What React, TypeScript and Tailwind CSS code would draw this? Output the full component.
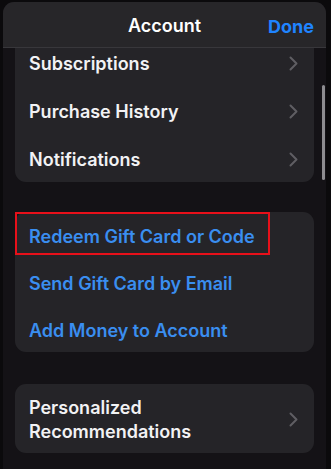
import React from "react";

const Chevron = () => (
  <svg width="9" height="15" viewBox="0 0 9 15" fill="none" className="shrink-0">
    <path d="M1.5 1.5 L7.5 7.5 L1.5 13.5" stroke="#5f5e63" strokeWidth="2" strokeLinecap="round" strokeLinejoin="round" />
  </svg>
);

const W = "text-[#f2f2f4] font-semibold text-[18px]";
const B = "text-[#3a8ef0] font-semibold text-[18px]";

export default function App() {
  const font = { fontFamily: "Inter, 'Noto Sans', sans-serif" };
  return (
    <div className="w-[331px] h-[469px] bg-[#0b0a0c] pl-[3px] pr-[5px] pt-[2px] overflow-hidden" style={font}>
      <div className="relative h-full rounded-t-[11px] bg-[#141216] overflow-hidden">
        <div className="h-[46px] bg-[#272629] border-b border-[#38373b] flex items-center justify-center relative pt-[2px]">
          <span className="text-white font-semibold text-[18px]">Account</span>
          <span className="absolute right-[12px] top-[24px] -translate-y-1/2 text-[#1f84ff] font-bold text-[18px]">Done</span>
        </div>
        <div className="px-[12px]">
          <div className="bg-[#252428] rounded-b-[11px]">
            <div className="h-[39px] flex items-center justify-between pl-[14px] pr-[16px] pb-[8px]">
              <span className={W}>Subscriptions</span>
              <Chevron />
            </div>
            <div className="h-[48px] flex items-center justify-between pl-[14px] pr-[16px] pt-[1px]">
              <span className={W}>Purchase History</span>
              <Chevron />
            </div>
            <div className="h-[47px] flex items-center justify-between pl-[14px] pr-[16px] pt-[1px]">
              <span className={W}>Notifications</span>
              <Chevron />
            </div>
          </div>
          <div className="mt-[30px] bg-[#252428] rounded-[11px]">
            <div className="h-[47px] flex items-start">
              <div className="h-[43px] w-[255px] border-2 border-[#e8101a] flex items-center pl-[12px] pt-[6px]">
                <span className={B}>Redeem Gift Card or Code</span>
              </div>
            </div>
            <div className="h-[45px] flex items-center pl-[14px] pt-[4px]">
              <span className={B}>Send Gift Card by Email</span>
            </div>
            <div className="h-[48px] flex items-center pl-[14px] pt-[5px]">
              <span className={B}>Add Money to Account</span>
            </div>
          </div>
          <div className="mt-[32px] bg-[#252428] rounded-[11px] h-[69px] flex items-center justify-between pl-[14px] pr-[16px] pt-[2px]">
            <span className={W + " leading-[24px]"}>
              Personalized
              <br />
              Recommendations
            </span>
            <Chevron />
          </div>
        </div>
        <div className="absolute left-[319px] top-[83px] w-[3px] h-[95px] rounded-full bg-[#8d8c90]" />
      </div>
    </div>
  );
}
